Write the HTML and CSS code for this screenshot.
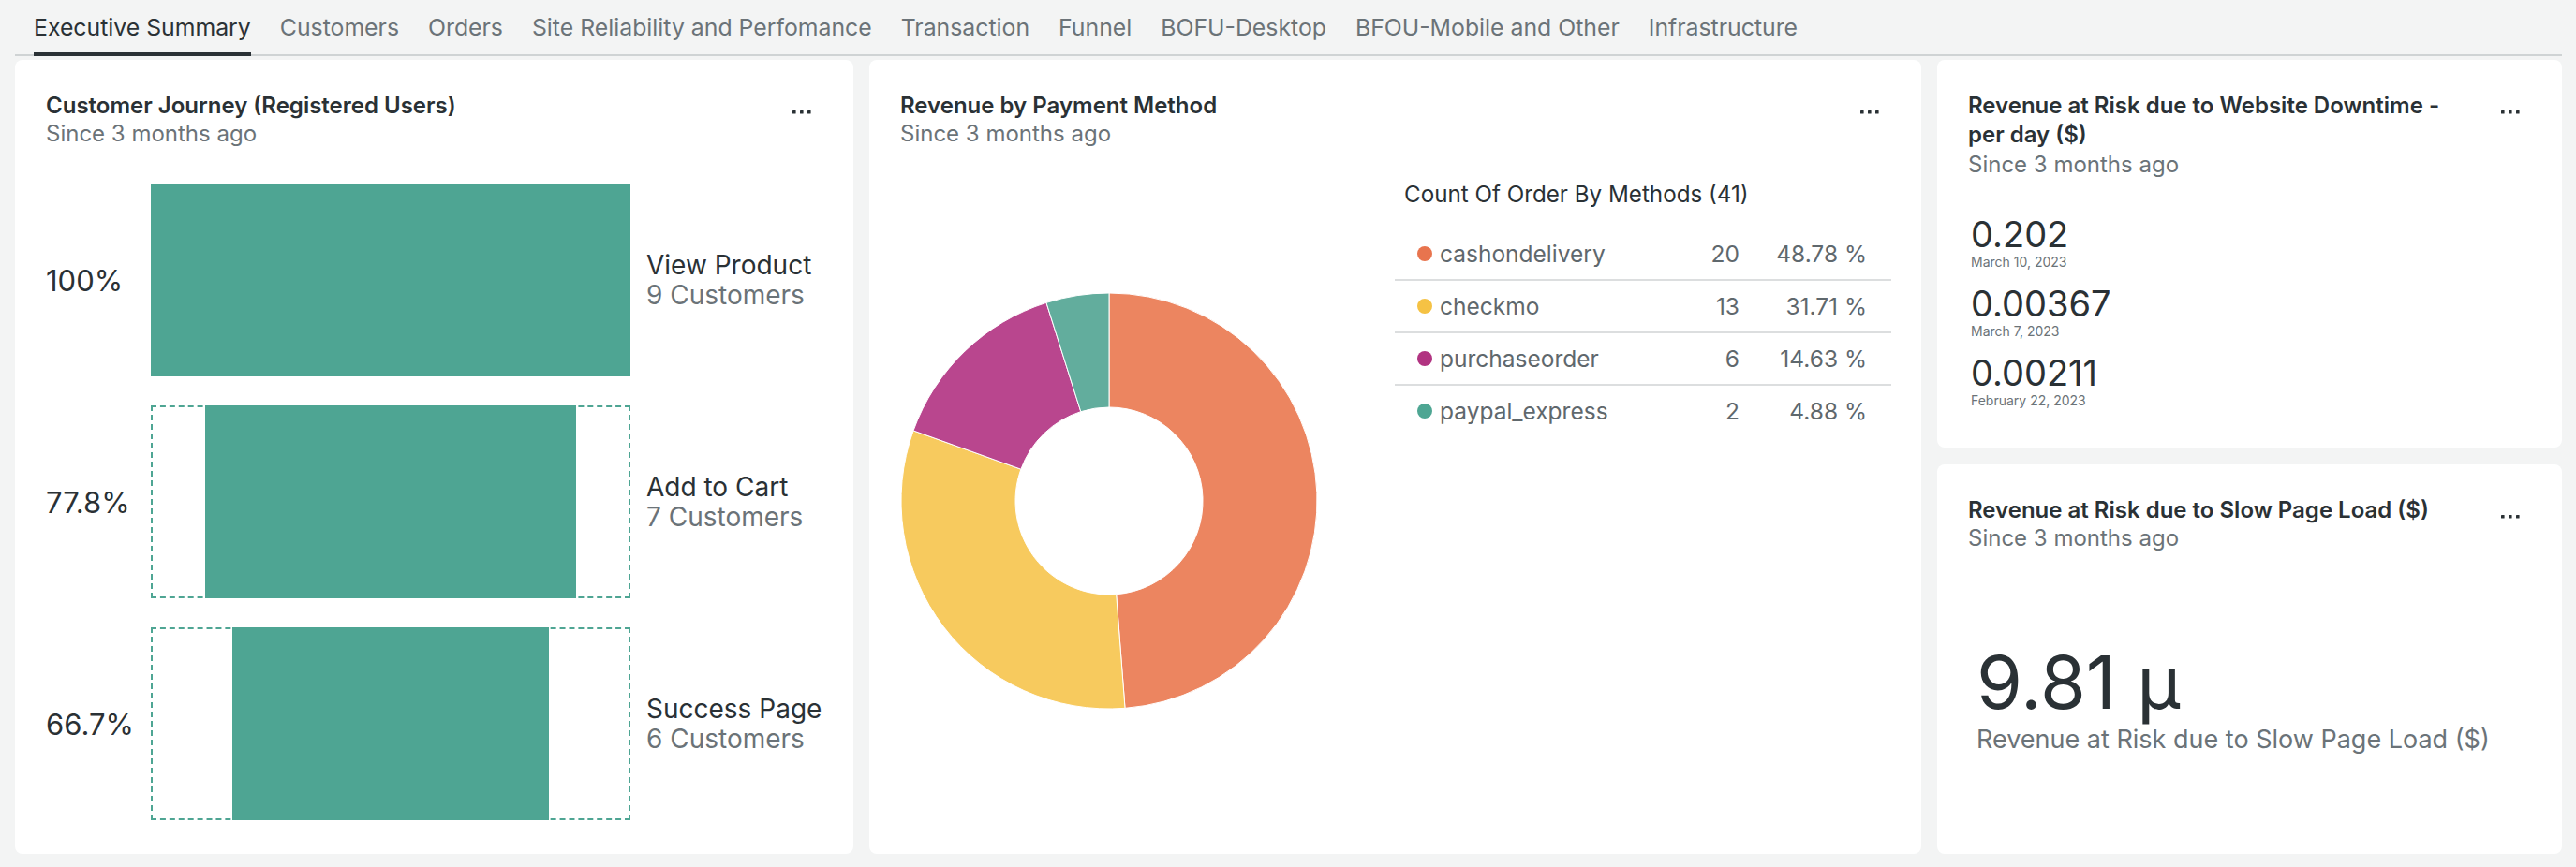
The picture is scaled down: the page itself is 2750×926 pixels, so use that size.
FILE: index.html
```html
<!DOCTYPE html>
<html lang="en">
<head>
<meta charset="utf-8">
<title>Executive Summary</title>
<link rel="stylesheet" href="styles.css">
</head>
<body>
<nav class="tabs">
  <div class="tab active">Executive Summary</div>
  <div class="tab">Customers</div>
  <div class="tab">Orders</div>
  <div class="tab">Site Reliability and Perfomance</div>
  <div class="tab">Transaction</div>
  <div class="tab">Funnel</div>
  <div class="tab">BOFU-Desktop</div>
  <div class="tab">BFOU-Mobile and Other</div>
  <div class="tab">Infrastructure</div>
</nav>
<main class="grid">
  <section class="card journey">
    <header class="card-head">
      <div class="titles">
        <h2 class="title">Customer Journey (Registered Users)</h2>
        <p class="since">Since 3 months ago</p>
      </div>
      <span class="menu"><svg width="20" height="4" viewBox="0 0 20 4"><rect x="0" y="0" width="3.6" height="3.6" rx="0.6"/><rect x="8" y="0" width="3.6" height="3.6" rx="0.6"/><rect x="16" y="0" width="3.6" height="3.6" rx="0.6"/></svg></span>
    </header>
    <div class="funnel">
      <div class="step">
        <span class="pct">100%</span>
        <div class="bar solid"><div class="fill" style="width:100%"></div></div>
        <div class="lbl"><span class="lbl-name">View Product</span><span class="lbl-count">9 Customers</span></div>
      </div>
      <div class="step">
        <span class="pct">77.8%</span>
        <div class="bar"><div class="fill" style="width:77.8%"></div></div>
        <div class="lbl"><span class="lbl-name">Add to Cart</span><span class="lbl-count">7 Customers</span></div>
      </div>
      <div class="step">
        <span class="pct">66.7%</span>
        <div class="bar"><div class="fill" style="width:66.7%"></div></div>
        <div class="lbl"><span class="lbl-name">Success Page</span><span class="lbl-count">6 Customers</span></div>
      </div>
    </div>
  </section>

  <section class="card payment">
    <header class="card-head">
      <div class="titles">
        <h2 class="title">Revenue by Payment Method</h2>
        <p class="since">Since 3 months ago</p>
      </div>
      <span class="menu"><svg width="20" height="4" viewBox="0 0 20 4"><rect x="0" y="0" width="3.6" height="3.6" rx="0.6"/><rect x="8" y="0" width="3.6" height="3.6" rx="0.6"/><rect x="16" y="0" width="3.6" height="3.6" rx="0.6"/></svg></span>
    </header>
    <div class="pay-body">
      <svg class="donut" width="444" height="444" viewBox="0 0 444 444">
        <path fill="#ec8560" stroke="#fff" stroke-width="1" d="M222,0 A222,222 0 0 1 239.0,443.35 L229.66,321.71 A100,100 0 0 0 222,122 Z"/>
        <path fill="#f7ca5e" stroke="#fff" stroke-width="1" d="M239.0,443.35 A222,222 0 0 1 13.07,146.93 L127.89,188.18 A100,100 0 0 0 229.66,321.71 Z"/>
        <path fill="#b9468e" stroke="#fff" stroke-width="1" d="M13.07,146.93 A222,222 0 0 1 154.99,10.35 L191.81,126.66 A100,100 0 0 0 127.89,188.18 Z"/>
        <path fill="#62ad9d" stroke="#fff" stroke-width="1" d="M154.99,10.35 A222,222 0 0 1 222,0 L222,122 A100,100 0 0 0 191.81,126.66 Z"/>
      </svg>
      <div class="legend">
        <div class="legend-title">Count Of Order By Methods (41)</div>
        <div class="row"><span class="dot dot-orange"></span><span class="name">cashondelivery</span><span class="cnt">20</span><span class="share">48.78 %</span></div>
        <div class="row"><span class="dot dot-yellow"></span><span class="name">checkmo</span><span class="cnt">13</span><span class="share">31.71 %</span></div>
        <div class="row"><span class="dot dot-purple"></span><span class="name">purchaseorder</span><span class="cnt">6</span><span class="share">14.63 %</span></div>
        <div class="row"><span class="dot dot-teal"></span><span class="name">paypal_express</span><span class="cnt">2</span><span class="share">4.88 %</span></div>
      </div>
    </div>
  </section>

  <section class="card downtime">
    <header class="card-head">
      <div class="titles">
        <h2 class="title">Revenue at Risk due to Website Downtime - per day ($)</h2>
        <p class="since">Since 3 months ago</p>
      </div>
      <span class="menu"><svg width="20" height="4" viewBox="0 0 20 4"><rect x="0" y="0" width="3.6" height="3.6" rx="0.6"/><rect x="8" y="0" width="3.6" height="3.6" rx="0.6"/><rect x="16" y="0" width="3.6" height="3.6" rx="0.6"/></svg></span>
    </header>
    <div class="values">
      <div class="val"><span class="val-num">0.202</span><span class="val-date">March 10, 2023</span></div>
      <div class="val"><span class="val-num">0.00367</span><span class="val-date">March 7, 2023</span></div>
      <div class="val"><span class="val-num">0.00211</span><span class="val-date">February 22, 2023</span></div>
    </div>
  </section>

  <section class="card slow">
    <header class="card-head">
      <div class="titles">
        <h2 class="title">Revenue at Risk due to Slow Page Load ($)</h2>
        <p class="since">Since 3 months ago</p>
      </div>
      <span class="menu"><svg width="20" height="4" viewBox="0 0 20 4"><rect x="0" y="0" width="3.6" height="3.6" rx="0.6"/><rect x="8" y="0" width="3.6" height="3.6" rx="0.6"/><rect x="16" y="0" width="3.6" height="3.6" rx="0.6"/></svg></span>
    </header>
    <div class="big">
      <div class="big-num">9.81 μ</div>
      <div class="big-cap">Revenue at Risk due to Slow Page Load ($)</div>
    </div>
  </section>
</main>
</body>
</html>
```

FILE: styles.css
```css
* { box-sizing: border-box; }
html, body { margin: 0; padding: 0; }
body {
  width: 2750px;
  height: 926px;
  overflow: hidden;
  background: #f3f4f4;
  font-family: Inter, "Noto Sans", "Liberation Sans", sans-serif;
  color: #2a3135;
}

/* Tabs */
.tabs {
  display: flex;
  gap: 31px;
  height: 60px;
  margin: 0 15px 0 16px;
  padding-left: 20px;
  border-bottom: 2px solid #cfd3d4;
}
.tab {
  display: flex;
  align-items: center;
  padding-top: 2px;
  font-size: 24.8px;
  color: #6b7378;
  white-space: nowrap;
  border-bottom: 4px solid transparent;
  margin-bottom: -2px;
}
.tab.active {
  color: #2a3135;
  border-bottom-color: #2a3135;
}

/* Grid */
.grid {
  display: grid;
  grid-template-columns: 895px 1123px 667px;
  grid-template-rows: 414px 416px;
  column-gap: 17px;
  row-gap: 18px;
  padding: 4px 15px 0 16px;
}
.journey, .payment { grid-row: span 2; }

.card {
  background: #fff;
  border-radius: 8px;
  display: flex;
  flex-direction: column;
  min-height: 0;
}
.card-head {
  display: flex;
  align-items: flex-start;
  gap: 38px;
  padding: 33px 32px 0 33px;
}
.titles { flex: 1; min-width: 0; }
.title {
  margin: 0;
  font-size: 24px;
  line-height: 31px;
  font-weight: 600;
  color: #2a3135;
}
.since {
  margin: 0;
  font-size: 24px;
  line-height: 30px;
  color: #6b7378;
}
.downtime .since { margin-top: 2px; }
.menu {
  flex: none;
  width: 40px;
  height: 31px;
  margin-right: 3px;
  display: flex;
  justify-content: center;
  padding-top: 21px;
}
.menu svg { display: block; fill: #2a3135; }

/* Funnel */
.funnel {
  display: flex;
  flex-direction: column;
  gap: 31px;
  margin-top: 38px;
  padding-left: 33px;
}
.step {
  display: flex;
  align-items: center;
  height: 206px;
}
.pct {
  width: 112px;
  flex: none;
  font-size: 31px;
  color: #2a3135;
}
.bar {
  flex: none;
  width: 512px;
  height: 100%;
  border: 2px dashed #4ea593;
  display: flex;
  justify-content: center;
}
.bar.solid { border-color: #4ea593; border-style: solid; }
.fill {
  background: #4ea593;
  margin: -2px 0;
}
.bar.solid .fill { margin: -2px; flex: 1; }
.lbl {
  display: flex;
  flex-direction: column;
  margin-left: 17px;
  font-size: 28px;
  line-height: 32px;
  white-space: nowrap;
}
.lbl-name { color: #2a3135; }
.lbl-count { color: #6b7378; }

/* Payment */
.pay-body {
  flex: 1;
  display: flex;
  align-items: flex-start;
  padding-left: 34px;
}
.donut { flex: none; align-self: center; display: block; }
.legend {
  width: 530px;
  margin-left: 83px;
  margin-top: 33px;
}
.legend-title {
  padding-left: 10px;
  font-size: 24.2px;
  line-height: 34px;
  color: #2a3135;
  margin-bottom: 19px;
}
.row {
  display: flex;
  align-items: center;
  height: 56px;
  padding: 0 26px 0 24px;
  border-bottom: 2px solid #dcdedf;
  font-size: 24.5px;
  color: #5f686d;
}
.row:last-child { border-bottom: none; height: 54px; }
.dot {
  width: 16px;
  height: 16px;
  border-radius: 50%;
  flex: none;
  margin-right: 8px;
}
.dot-orange { background: #e8744e; }
.dot-yellow { background: #f5c244; }
.dot-purple { background: #b13381; }
.dot-teal { background: #4ea693; }
.name { flex: 1; }
.cnt { width: 100px; text-align: right; }
.share { width: 136px; text-align: right; }

/* Downtime values */
.values {
  display: flex;
  flex-direction: column;
  gap: 14px;
  margin-top: 39px;
  padding-left: 36px;
}
.val { display: flex; flex-direction: column; }
.val-num {
  font-size: 38px;
  line-height: 40px;
  color: #2a3135;
}
.val-date {
  font-size: 14px;
  line-height: 20px;
  color: #6b7378;
}

/* Slow page */
.big {
  flex: 1;
  display: flex;
  flex-direction: column;
  justify-content: center;
  padding: 0 0 9px 42px;
}
.big-num {
  font-size: 79px;
  line-height: 80px;
  color: #2a3135;
}
.big-cap {
  margin-top: 6px;
  font-size: 27px;
  line-height: 32px;
  color: #6b7378;
}
```
